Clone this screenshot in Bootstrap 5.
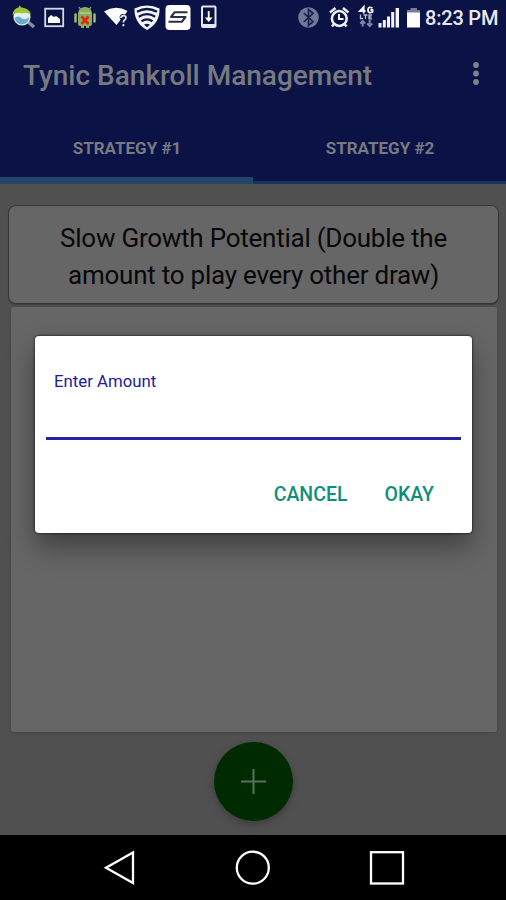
<!DOCTYPE html>
<html lang="en">
<head>
<meta charset="utf-8">
<meta name="viewport" content="width=device-width, initial-scale=1">
<title>Tynic Bankroll Management</title>
<link href="https://cdn.jsdelivr.net/npm/bootstrap@5.3.0/dist/css/bootstrap.min.css" rel="stylesheet">
<style>
  body { font-family: Roboto, "Liberation Sans", sans-serif; background: #505050; }
  .screen { width: 506px; height: 900px; }
  .app-head { background: #0b1346; color: #777a80; height: 184px; }
  .status { height: 36px; color: #e8e9ee; }
  .status svg { height: 36px; flex: none; }
  .clock { font-size: 20px; font-weight: 500; line-height: 37px; width: 81px; letter-spacing: -.2px; }
  .toolbar { height: 78px; padding-left: 23px; }
  .app-title { font-size: 28px; font-weight: 500; line-height: 32px; padding-top: 1px; }
  .tabs { height: 70px; }
  .tab-btn { color: #777a80; font-size: 17px; font-weight: 700; line-height: 20px; padding: 24px 0 0 1px; border-bottom: 3px solid #173359; }
  .tab-btn.current { border-bottom: 7px solid #24456a; }
  .content { padding: 21px 7px 0 8px; }
  .strategy { height: 99px; border: 1px solid #353535; border-radius: 8px; background: #666; color: #080808; font-size: 26px; letter-spacing: -.24px; line-height: 37px; padding-top: 14px; box-shadow: 0 1px 1px #3e3e3e; }
  .sheet { height: 425px; margin: 3px 2px 0 3px; background: #666; border-radius: 2px; box-shadow: 0 1px 3px #424242; }
  .fab { width: 79px; height: 79px; margin-top: 10px; background: #002b00; box-shadow: 0 3px 7px #3c3c3c; }
  .sysnav { height: 65px; background: #000; }
  .dialog-box { left: 35px; top: 336px; width: 437px; height: 197px; border-radius: 4px; background: #fff; box-shadow: 0 0 2px 1px rgba(0,0,0,.45), 0 14px 28px rgba(0,0,0,.38); padding: 35px 11px 0; }
  .field-label { color: #1c1ca0; font-size: 16.800px; line-height: 20px; padding-left: 8px; }
  .amount { height: 49px; border: 0; border-bottom: 3px solid #2323a5; outline: 0; background: none; }
  .actions { padding: 43px 27px 0 0; gap: 37px; }
  .action { color: #0d9079; font-size: 19.500px; font-weight: 500; line-height: 24px; }
</style>
</head>
<body>
<div class="screen position-relative overflow-hidden d-flex flex-column">
  <header class="app-head">
    <div class="status d-flex">
      <!-- search -->
      <svg width="40" viewBox="0 0 40 36"><path d="M28 22l6 5" stroke="#8a8f9b" stroke-width="3.5"/><circle cx="22" cy="17" r="8.6" fill="#e5eee9"/><path d="M14.5 18q4-3 7 0t8-1q-1 7-7.500 7.500-6-.5-7.500-6.500z" fill="#69aecb"/><path d="M12.500 15q1-7 6-7.500l1-2 2 2q8 1 9.500 7-5-3-9-1-4-2-9.500 1.500z" fill="#9bc633"/></svg>
      <!-- picture -->
      <svg width="32" viewBox="40 0 32 36"><rect x="45.200" y="8.700" width="18" height="17.500" fill="none" stroke="#d7d8df" stroke-width="1.800"/><path d="M48 23v-5l3-3 3 2 2-1 4 3v4z" fill="#fff"/></svg>
      <!-- android error -->
      <svg width="28" viewBox="72 0 28 36"><path d="M79 7l2 3m10-3l-2 3" stroke="#91ad66" stroke-width="1.300"/><path d="M78 13q1-6 7-6t7 6v11q0 2-2 2h-1v2h-3v-2h-2v2h-3v-2h-1q-2 0-2-2z" fill="#8bad60"/><path d="M75.500 14.500v7m19-7v7" stroke="#9cba74" stroke-width="2.500" stroke-linecap="round"/><path d="M79.500 13h11" stroke="#c9d8b2"/><path d="M81.500 16.500l7 7.500m0-7.500l-7 7.500" stroke="#df2614" stroke-width="2.600"/></svg>
      <!-- wifi unknown -->
      <svg width="32" viewBox="100 0 32 36"><path d="M104 11.500q11.500-7 23.500-.5l-2.500 3.500q-4.500-1.500-5.500 2.500l1 3-4 5z" fill="#fff"/><path d="M121 18q.2-2.400 2.600-2.400 2.300 0 2.300 2.200 0 1.600-1.500 2.300-1 .5-1 2.400M123.400 24v2.200" fill="none" stroke="#dfe1ec" stroke-width="1.800"/></svg>
      <!-- wifi shield -->
      <svg width="31" viewBox="132 0 31 36"><path d="M134.500 8.500q12.500-6 25 0 .5 14.500-12.500 21.500-13-7-12.500-21.500z" fill="#f4f5f9"/><g fill="none" stroke="#10184a" stroke-width="2.300"><path d="M137 11.800q10-5.600 20 0M138.800 16.700q8.200-5 16.400 0M141.500 21.200q5.500-3.600 11 0"/></g><path d="M144 24.700q3-1.800 6 0l-3 2.500z" fill="#10184a"/></svg>
      <!-- S badge -->
      <svg width="32" viewBox="163 0 32 36"><rect x="165.500" y="5" width="25" height="25" rx="4" fill="#fff"/><path d="M187.500 12.300h-13l-3.500 4.700h14.500l-3.500 4.700h-13.500" fill="none" stroke="#2b2f45" stroke-width="2.100" stroke-linejoin="round"/></svg>
      <!-- download -->
      <svg width="30" viewBox="195 0 30 36"><rect x="202" y="6.500" width="13.500" height="20.500" rx="1" fill="#0b1346" stroke="#e6e7ee" stroke-width="2"/><path d="M202 25.500h13.500" stroke="#e6e7ee" stroke-width="3"/><path d="M208.700 11v8" stroke="#fff" stroke-width="1.800"/><path d="M204.800 17.500h7.800l-3.900 4.500z" fill="#fff"/></svg>
      <!-- bluetooth -->
      <svg class="ms-auto" width="30" viewBox="294 0 30 36"><circle cx="308.500" cy="17.500" r="10.300" fill="#6f7898"/><path d="M303.800 13l9.200 8.700-4.500 3.800v-16l4.500 3.800-9.200 8.700" fill="none" stroke="#18204d" stroke-width="1.700"/></svg>
      <!-- alarm -->
      <svg width="32" viewBox="324 0 32 36"><circle cx="339.300" cy="18.500" r="7.400" fill="none" stroke="#f2f3f6" stroke-width="2.500"/><path d="M330 12.500l5.500-4.500m7.500 0l5.500 4.500M334 24l-2 2.500m12.500-2.500l2 2.500" stroke="#eceef3" stroke-width="2.500"/><path d="M339 14v5h4.500" fill="none" stroke="#fff" stroke-width="1.900"/></svg>
      <!-- 4G LTE data -->
      <svg width="20" viewBox="356 0 20 36"><g fill="none" stroke="#f2f3f6" stroke-width="1.900"><path d="M363.700 13.500V7l-3.700 4h5.500M372.500 8q-4.500-2-4.500 2t4.500 2v-2h-2"/></g><g fill="none" stroke="#b9bdcb" stroke-width="1.300"><path d="M360.500 14.500v4h2.500M363.500 15h4m-2 0v4M372 15h-3v3.800h3M369 17h2.500"/></g><path d="M362.700 20v6.500m-2.500-3l2.500-2.500 2.500 2.500M369.700 20v6.500m-2.500-3l2.500 2.500 2.500-2.500" fill="none" stroke="#7c839e" stroke-width="2"/></svg>
      <!-- signal -->
      <svg width="28" viewBox="376 0 28 36"><g fill="#f4f4f7"><rect x="378.500" y="23" width="3" height="4.500"/><rect x="382.800" y="20" width="3" height="7.500"/><rect x="387" y="16.500" width="3" height="11"/><rect x="391.200" y="12" width="3" height="15.500"/><rect x="395.600" y="8" width="3.400" height="19.500"/></g></svg>
      <!-- battery -->
      <svg width="21" viewBox="404 0 21 36"><path d="M410.500 8h6.500v2h3v4h-13v-4h3.500z" fill="#747c98"/><rect x="407" y="12.500" width="13" height="15" fill="#fff"/></svg>
      <span class="clock text-nowrap">8:23 PM</span>
    </div>
    <div class="toolbar d-flex align-items-center">
      <div class="app-title text-nowrap">Tynic Bankroll Management</div>
      <svg class="ms-auto me-4" width="12" height="28" viewBox="0 0 12 28"><g fill="#80828a"><circle cx="6" cy="4" r="2.900"/><circle cx="6" cy="12.500" r="2.900"/><circle cx="6" cy="21" r="2.900"/></g></svg>
    </div>
    <div class="tabs row g-0 text-center">
      <div class="tab-btn current col-6">STRATEGY #1</div>
      <div class="tab-btn col-6">STRATEGY #2</div>
    </div>
  </header>
  <main class="content flex-grow-1">
    <div class="strategy text-center">Slow Growth Potential (Double the<br>amount to play every other draw)</div>
    <div class="sheet"></div>
    <div class="fab rounded-circle mx-auto d-flex align-items-center justify-content-center">
      <svg width="27" height="27" viewBox="0 0 27 27"><path d="M13.500 1v25M1 13.500h25" stroke="#58735a" stroke-width="2"/></svg>
    </div>
  </main>
  <nav class="sysnav">
    <svg width="506" height="65" viewBox="0 835 506 65" fill="none" stroke="#fff" stroke-width="2.300"><path d="M133 852.500v30.500l-27-15.200z"/><circle cx="252.800" cy="867.700" r="16"/><rect x="371" y="852.200" width="32" height="31.300"/></svg>
  </nav>
  <div class="dialog-box position-absolute" role="dialog">
    <label class="field-label d-block" for="amount">Enter Amount</label>
    <input class="amount d-block w-100" id="amount" type="text">
    <div class="actions d-flex justify-content-end">
      <span class="action">CANCEL</span>
      <span class="action">OKAY</span>
    </div>
  </div>
</div>
<script src="https://cdn.jsdelivr.net/npm/bootstrap@5.3.0/dist/js/bootstrap.bundle.min.js"></script>
</body>
</html>
